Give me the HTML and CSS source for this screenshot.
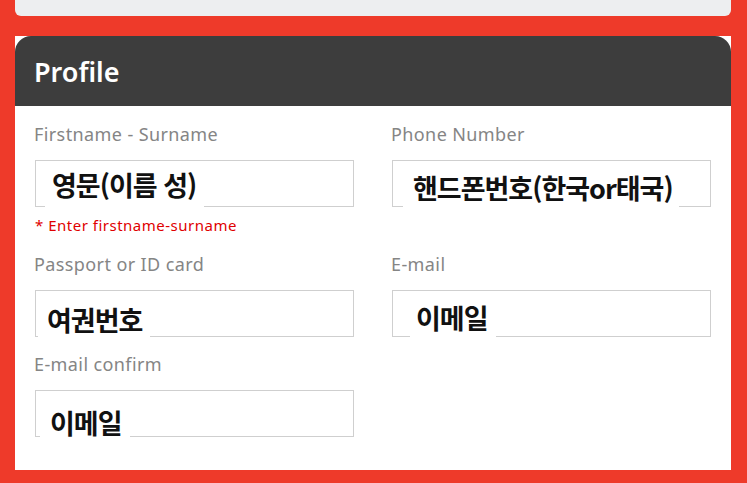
FILE: index.html
```html
<!DOCTYPE html>
<html lang="ko">
<head>
  <meta charset="UTF-8">
  <title>Profile</title>
  <link rel="stylesheet" href="styles.css">
</head>
<body>
  <div class="topbar"></div>

  <div class="card">
    <div class="card-head">Profile</div>

    <div class="card-body">
      <div class="field">
        <label class="label">Firstname - Surname</label>
        <div class="input-wrap">
          <input class="input" type="text">
          <span class="note note-name">영문(이름 성)</span>
        </div>
        <div class="error">* Enter firstname-surname</div>
      </div>

      <div class="field">
        <label class="label">Phone Number</label>
        <div class="input-wrap">
          <input class="input" type="text">
          <span class="note note-phone">핸드폰번호(한국or태국)</span>
        </div>
      </div>

      <div class="field">
        <label class="label">Passport or ID card</label>
        <div class="input-wrap">
          <input class="input" type="text">
          <span class="note note-passport">여권번호</span>
        </div>
      </div>

      <div class="field">
        <label class="label">E-mail</label>
        <div class="input-wrap">
          <input class="input" type="text">
          <span class="note note-mail">이메일</span>
        </div>
      </div>

      <div class="field">
        <label class="label">E-mail confirm</label>
        <div class="input-wrap">
          <input class="input" type="text">
          <span class="note note-confirm">이메일</span>
        </div>
      </div>
    </div>
  </div>
</body>
</html>
```

FILE: styles.css
```css
body {
  margin: 0;
  background: #ee3a2a;
  font-family: "Noto Sans", "Open Sans", sans-serif;
}

.topbar {
  height: 16px;
  margin: 0 16px 0 15px;
  background: #edeef0;
  border-radius: 0 0 6px 6px;
}

.card {
  margin: 20px 16px 0 15px;
  background: #fff;
}

.card-head {
  height: 70px;
  padding-left: 19px;
  background: #3d3d3d;
  border-radius: 16px 16px 0 0;
  color: #fff;
  font-size: 27px;
  font-weight: 600;
  line-height: 72px;
}

.card-body {
  display: grid;
  grid-template-columns: 1fr 1fr;
  column-gap: 38px;
  row-gap: 15px;
  align-items: start;
  padding: 16px 20px 33px;
}

.label {
  display: block;
  margin-left: -1px;
  color: #858585;
  font-size: 18px;
  line-height: 25px;
  letter-spacing: 0.4px;
}

.input-wrap {
  position: relative;
  margin-top: 13px;
}

.input {
  display: block;
  box-sizing: border-box;
  width: 100%;
  height: 47px;
  margin: 0;
  border: 1px solid #cfcfcf;
  background: #fff;
}

.note {
  position: absolute;
  background: #fff;
  color: #111;
  font-family: "Noto Sans CJK KR", sans-serif;
  font-weight: 700;
  font-size: 27px;
  line-height: 40px;
  letter-spacing: -1px;
  white-space: nowrap;
}

.note-name { left: 10px; top: 5px; padding: 0 8px 2px 7px; }
.note-phone { left: 11px; top: 8px; padding: 0 6px 2px 10px; }
.note-passport { left: 3px; top: 10px; padding: 0 8px 2px 9px; }
.note-mail { left: 18px; top: 8px; padding: 0 8px 2px 6px; }
.note-confirm { left: 5px; top: 13px; padding: 0 8px 0 10px; }

.error {
  margin-top: 6px;
  color: #e00000;
  font-size: 15px;
  line-height: 24px;
  letter-spacing: 0.5px;
}
```
